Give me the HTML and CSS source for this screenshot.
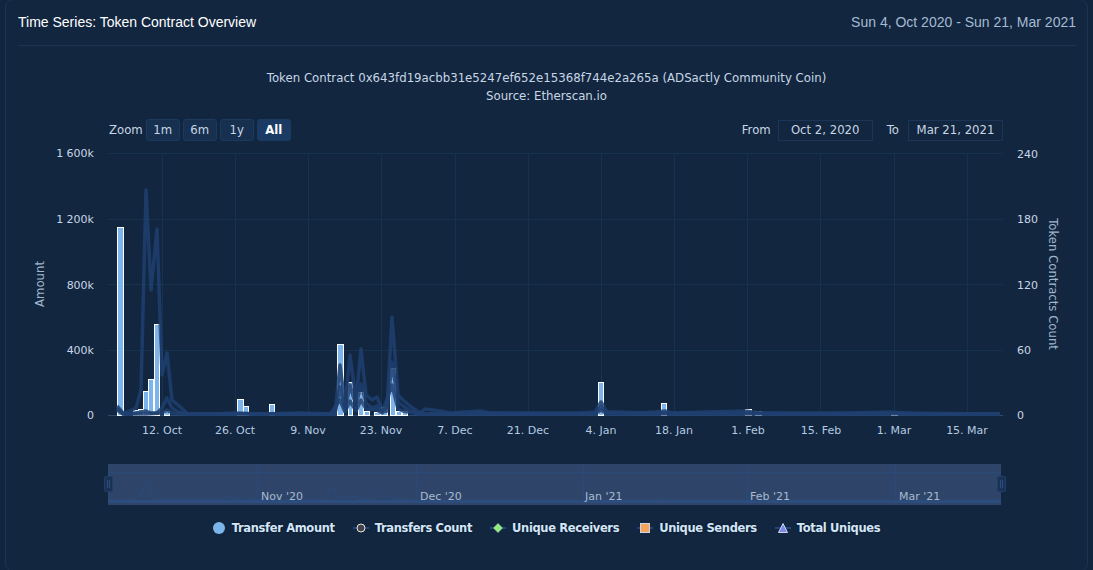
FILE: index.html
```html
<!DOCTYPE html>
<html lang="en">
<head>
    <meta charset="UTF-8">
    <title>Token Contract Overview</title>
    <link rel="stylesheet" href="styles.css">
</head>
<body>
    <div class="card">
        <div class="card-header">
            <span class="card-title">Time Series: Token Contract Overview</span>
            <span class="card-dates">Sun 4, Oct 2020 - Sun 21, Mar 2021</span>
        </div>

        <div class="chart-title">
            <div>Token Contract 0x643fd19acbb31e5247ef652e15368f744e2a265a (ADSactly Community Coin)</div>
            <div>Source: Etherscan.io</div>
        </div>

        <div class="range-bar">
            <div class="range-group">
                <span class="range-label">Zoom</span>
                <button class="range-button">1m</button>
                <button class="range-button">6m</button>
                <button class="range-button">1y</button>
                <button class="range-button active">All</button>
            </div>
            <div class="range-group">
                <span class="range-label from">From</span>
                <span class="range-input">Oct 2, 2020</span>
                <span class="range-label to">To</span>
                <span class="range-input">Mar 21, 2021</span>
            </div>
        </div>

        <svg class="plot" viewBox="6 145 1081 370" width="1081" height="370">
            <!-- grid -->
            <g class="grid">
                <path d="M108 153.5H1003M108 219.5H1003M108 284.5H1003M108 350.5H1003"/>
                <path d="M162.5 153V415M235.5 153V415M308.5 153V415M381.5 153V415M455.5 153V415M528.5 153V415M601.5 153V415M674.5 153V415M747.5 153V415M820.5 153V415M894.5 153V415M967.5 153V415"/>
            </g>
            <path class="axis" d="M108 415.5H1003"/>

            <!-- transfer amount -->
            <g class="bars">
                <rect x="117.5" y="227.5" width="6" height="188"/>
                <rect x="133.5" y="410.5" width="5" height="5"/>
                <rect x="138.5" y="409.5" width="5" height="6"/>
                <rect x="143.5" y="391.5" width="5" height="24"/>
                <rect x="148.5" y="379.5" width="5" height="36"/>
                <rect x="154.5" y="324.5" width="5" height="91"/>
                <rect x="164.5" y="411.5" width="5" height="4"/>
                <rect x="237.5" y="399.5" width="6" height="16"/>
                <rect x="243.5" y="406.5" width="5" height="9"/>
                <rect x="269.5" y="404.5" width="5" height="11"/>
                <rect x="337.5" y="344.5" width="6" height="71"/>
                <rect x="348.5" y="382.5" width="4" height="33"/>
                <rect x="358.5" y="392.5" width="5" height="23"/>
                <rect x="364.5" y="411.5" width="5" height="4"/>
                <rect x="374.5" y="412.5" width="6" height="3"/>
                <rect x="381.5" y="407.5" width="6" height="8"/>
                <rect x="390.5" y="368.5" width="5" height="47"/>
                <rect x="396.5" y="411.5" width="5" height="4"/>
                <rect x="402.5" y="411.5" width="5" height="4"/>
                <rect x="598.5" y="382.5" width="5" height="33"/>
                <rect x="661.5" y="403.5" width="5" height="12"/>
                <rect x="745.5" y="409.5" width="6" height="6"/>
                <rect x="755.5" y="411.5" width="6" height="4"/>
                <rect x="891.5" y="413.5" width="6" height="2"/>
            </g>

            <!-- uniques and counts -->
            <g class="lines">
                <polyline points="117,406 123,413 130,411 136,408 141,390 146,190 151,290 157,229 162,375 167,353 172,400 178,405 188,414 210,414 235,413 260,414 300,413 330,414 335,414 340,365 345,405 350,355 356,400 361,349 366,395 372,400 377,397 382,410 387,408 392,317 398,395 403,400 410,406 420,413 425,409 440,411 450,413 480,411 490,413 570,413 580,413 595,412 601,402 607,412 620,412 640,413 655,412 665,411 672,413 745,411 760,413 820,414 890,412 920,414 1000,414"/>
                <polyline points="117,408 123,414 136,413 146,411 151,413 157,413 162,408 167,398 172,408 178,412 188,414 235,414 330,414 335,414 340,387 345,411 350,385 356,406 361,384 366,403 372,408 377,406 382,412 387,411 392,362 398,402 403,406 410,411 420,414 480,413 570,414 595,413 601,407 607,413 655,413 665,413 745,413 890,413 1000,414"/>
                <polyline points="117,410 123,414 146,414 162,413 167,410 172,413 188,414 330,414 340,400 345,412 350,401 356,411 361,400 366,409 377,410 382,413 392,385 398,409 403,411 420,414 595,414 601,410 607,414 745,414 1000,414"/>
            </g>

            <!-- axis labels -->
            <g class="tick-left">
                <text x="94" y="157">1 600k</text>
                <text x="94" y="223">1 200k</text>
                <text x="94" y="289">800k</text>
                <text x="94" y="354">400k</text>
                <text x="94" y="419">0</text>
            </g>
            <g class="tick-right">
                <text x="1017" y="158">240</text>
                <text x="1017" y="223">180</text>
                <text x="1017" y="289">120</text>
                <text x="1017" y="354">60</text>
                <text x="1017" y="419">0</text>
            </g>
            <g class="tick-bottom">
                <text x="162" y="434">12. Oct</text>
                <text x="235" y="434">26. Oct</text>
                <text x="308" y="434">9. Nov</text>
                <text x="381" y="434">23. Nov</text>
                <text x="455" y="434">7. Dec</text>
                <text x="528" y="434">21. Dec</text>
                <text x="601" y="434">4. Jan</text>
                <text x="674" y="434">18. Jan</text>
                <text x="748" y="434">1. Feb</text>
                <text x="821" y="434">15. Feb</text>
                <text x="894" y="434">1. Mar</text>
                <text x="967" y="434">15. Mar</text>
            </g>
            <text class="axis-title" transform="translate(44 284) rotate(-90)">Amount</text>
            <text class="axis-title" transform="translate(1049 284) rotate(90)">Token Contracts Count</text>

            <!-- navigator -->
            <rect class="nav-bg" x="108" y="464" width="893" height="41"/>
            <path class="nav-grid" d="M108.5 472.5H1001M109.5 464V504M257.5 464V504M416.5 464V504M583.5 464V504M747.5 464V504M895.5 464V504"/>
            <rect class="nav-strip" x="108" y="500" width="893" height="3"/>
            <path class="nav-line" d="M112 500C118 500 124 500 132 499C138 497 141 496 143 488C145 482 148 482 150 490C151 498 154 499 158 499C170 499 180 499 220 499C228 497 234 497 242 499C270 500 310 500 326 499C329 486 332 484 335 493C337 499 340 500 343 497C345 494 346 495 349 499C352 497 354 495 358 499C364 500 372 499 379 498C382 493 384 491 388 497C390 499 400 499 412 500C470 500 560 500 655 500C658 498 662 498 665 500C720 500 800 501 1000 500"/>
            <g class="nav-labels">
                <text x="261" y="500">Nov '20</text>
                <text x="420" y="500">Dec '20</text>
                <text x="585" y="500">Jan '21</text>
                <text x="750" y="500">Feb '21</text>
                <text x="899" y="500">Mar '21</text>
            </g>
            <g class="nav-handle">
                <rect x="104.5" y="476.5" width="8" height="15" rx="1"/>
                <path d="M107.5 480V488M109.5 480V488"/>
                <rect x="997.5" y="476.5" width="8" height="15" rx="1"/>
                <path d="M1000.5 480V488M1002.5 480V488"/>
            </g>
        </svg>

        <div class="legend">
            <div class="legend-item">
                <svg class="legend-marker first" width="12" height="12" viewBox="0 0 12 12"><circle cx="6" cy="6" r="6" fill="#7cb5ec"/></svg>
                <span>Transfer Amount</span>
            </div>
            <div class="legend-item">
                <svg class="legend-marker" width="16" height="12" viewBox="0 0 16 12"><path class="legend-line" d="M0 6H16"/><circle cx="8" cy="6" r="4" fill="#434348" stroke="#e6e6e6"/></svg>
                <span>Transfers Count</span>
            </div>
            <div class="legend-item">
                <svg class="legend-marker" width="16" height="12" viewBox="0 0 16 12"><path class="legend-line" d="M0 6H16"/><path d="M8 1.5L12.5 6L8 10.5L3.5 6Z" fill="#90ed7d" stroke="#c9e8c0" stroke-width="0.5"/></svg>
                <span>Unique Receivers</span>
            </div>
            <div class="legend-item">
                <svg class="legend-marker" width="16" height="12" viewBox="0 0 16 12"><path class="legend-line" d="M0 6H16"/><rect x="3.5" y="1.5" width="9" height="9" fill="#f7a35c" stroke="#c9d8e8"/></svg>
                <span>Unique Senders</span>
            </div>
            <div class="legend-item">
                <svg class="legend-marker" width="16" height="12" viewBox="0 0 16 12"><path class="legend-line" d="M0 6H16"/><path d="M8 1.5L12.5 10.5H3.5Z" fill="#8085e9" stroke="#c9d8e8"/></svg>
                <span>Total Uniques</span>
            </div>
        </div>
    </div>
</body>
</html>
```

FILE: styles.css
```css
body, html {
    margin: 0;
    padding: 0;
    width: 100%;
    height: 100%;
    overflow: hidden;
    background: #11253e;
    font-family: 'DejaVu Sans', sans-serif;
}

.card {
    box-sizing: border-box;
    width: 1083px;
    height: 573px;
    margin: -1px 5px 0;
    background: #12263f;
    border: 1px solid #1b3454;
    border-radius: 8px;
}

.card-header {
    display: flex;
    justify-content: space-between;
    align-items: center;
    box-sizing: border-box;
    height: 46px;
    margin: 0 11px 0 12px;
    padding-bottom: 2px;
    border-bottom: 1px solid #1b3454;
    font-family: 'Liberation Sans', sans-serif;
    font-size: 14px;
}

.card-title {
    color: #ffffff;
}

.card-dates {
    color: #a5bbd3;
}

.chart-title {
    margin-top: 23px;
    text-align: center;
    font-size: 11.75px;
    line-height: 18px;
    color: #c8d6e5;
}

.range-bar {
    display: flex;
    justify-content: space-between;
    align-items: center;
    height: 22px;
    margin: 14px 84px 0 103px;
    font-size: 11.7px;
}

.range-group {
    display: flex;
    align-items: center;
    gap: 3px;
}

.range-label {
    color: #c8d6e5;
}

.range-label.from {
    margin-right: 4px;
}

.range-label.to {
    margin: 0 6px 0 11px;
}

.range-button {
    width: 34px;
    height: 22px;
    padding: 0;
    background: #17304f;
    border: 1px solid #1b3a60;
    border-radius: 3px;
    font-family: 'DejaVu Sans', sans-serif;
    font-size: 11.7px;
    color: #c8d6e5;
}

.range-button.active {
    background: #1c3b64;
    font-weight: bold;
    color: #ffffff;
}

.range-input {
    box-sizing: border-box;
    width: 95px;
    height: 21px;
    border: 1px solid #1b3556;
    line-height: 19px;
    text-align: center;
    color: #c8d6e5;
}

.plot {
    display: block;
    margin-top: 4px;
}

.plot text {
    font-family: 'DejaVu Sans', sans-serif;
    font-size: 11px;
}

.grid path {
    fill: none;
    stroke: #17324f;
    stroke-width: 1;
}

.axis {
    stroke: #2a4a70;
    stroke-width: 1;
}

.bars rect {
    fill: #7cb5ec;
    stroke: #ffffff;
    stroke-width: 1;
}

.lines polyline {
    fill: none;
    stroke: #1f3f70;
    stroke-width: 3.5;
    stroke-opacity: 0.85;
    stroke-linejoin: round;
}

.tick-left text {
    text-anchor: end;
    fill: #c8d6e5;
}

.tick-right text {
    fill: #c8d6e5;
}

.tick-bottom text {
    text-anchor: middle;
    fill: #b4cbe2;
}

.plot .axis-title {
    text-anchor: middle;
    font-size: 11.7px;
    fill: #a0b6cd;
}

.nav-bg {
    fill: #2e4569;
}

.nav-grid {
    fill: none;
    stroke: #294a78;
    stroke-width: 1;
}

.nav-strip {
    fill: #2c4d7d;
}

.nav-line {
    fill: none;
    stroke: #2a4a7a;
    stroke-width: 1.2;
}

.nav-labels text {
    fill: #a7bad0;
}

.nav-handle rect {
    fill: #1a3355;
    stroke: #1f3f6a;
}

.nav-handle path {
    fill: none;
    stroke: #2b4c7c;
}

.legend {
    display: flex;
    justify-content: center;
    gap: 18px;
    margin-top: 3px;
    font-size: 11.5px;
    letter-spacing: -0.35px;
    font-weight: bold;
    color: #d3e6f8;
    text-shadow: 0 0 2px #0a1626;
}

.legend-item {
    display: flex;
    align-items: center;
    gap: 6px;
    height: 20px;
}

.legend-marker {
    display: block;
}

.legend-marker.first {
    margin-right: 1px;
}

.legend-line {
    stroke: #20457a;
    stroke-width: 2;
}
```
